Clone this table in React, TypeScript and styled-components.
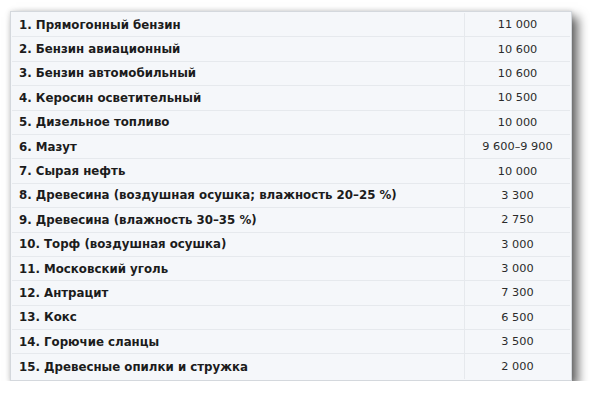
import React from 'react';
import styled, { createGlobalStyle } from 'styled-components';

const GlobalStyle = createGlobalStyle`
  html, body {
    margin: 0;
    background: #ffffff;
  }
`;

const Page = styled.div`
  padding: 11px 0 0 10px;
`;

const Card = styled.div`
  width: 562px;
  box-sizing: border-box;
  background: #f5f7fa;
  border: 1px solid #d4d8dd;
  box-shadow: 6px 6px 10px rgba(0, 0, 0, 0.6), 0 0 5px rgba(0, 0, 0, 0.14);
  padding: 1px;
`;

const Table = styled.div`
  display: grid;
  grid-template-columns: 453px 1fr;
  grid-auto-rows: 24.4px;
  font-family: Tahoma, 'DejaVu Sans', Verdana, sans-serif;
`;

const Label = styled.div<{ $last?: boolean }>`
  display: flex;
  align-items: center;
  padding-left: 7px;
  font-size: 11.8px;
  font-weight: bold;
  color: #1c1c1c;
  border-right: 1px solid #e6e9ed;
  border-bottom: ${(p) => (p.$last ? 'none' : '1px solid #e6e9ed')};
  white-space: nowrap;
`;

const Value = styled.div<{ $last?: boolean }>`
  display: flex;
  align-items: center;
  justify-content: center;
  font-size: 11.3px;
  color: #2b2b2b;
  border-bottom: ${(p) => (p.$last ? 'none' : '1px solid #e6e9ed')};
`;

const rows: [string, string][] = [
  ['1. Прямогонный бензин', '11 000'],
  ['2. Бензин авиационный', '10 600'],
  ['3. Бензин автомобильный', '10 600'],
  ['4. Керосин осветительный', '10 500'],
  ['5. Дизельное топливо', '10 000'],
  ['6. Мазут', '9 600–9 900'],
  ['7. Сырая нефть', '10 000'],
  ['8. Древесина (воздушная осушка; влажность 20–25 %)', '3 300'],
  ['9. Древесина (влажность 30–35 %)', '2 750'],
  ['10. Торф (воздушная осушка)', '3 000'],
  ['11. Московский уголь', '3 000'],
  ['12. Антрацит', '7 300'],
  ['13. Кокс', '6 500'],
  ['14. Горючие сланцы', '3 500'],
  ['15. Древесные опилки и стружка', '2 000'],
];

const App: React.FC = () => (
  <>
    <GlobalStyle />
    <Page>
      <Card>
        <Table>
          {rows.map(([name, value], i) => (
            <React.Fragment key={name}>
              <Label $last={i === rows.length - 1}>{name}</Label>
              <Value $last={i === rows.length - 1}>{value}</Value>
            </React.Fragment>
          ))}
        </Table>
      </Card>
    </Page>
  </>
);

export default App;
